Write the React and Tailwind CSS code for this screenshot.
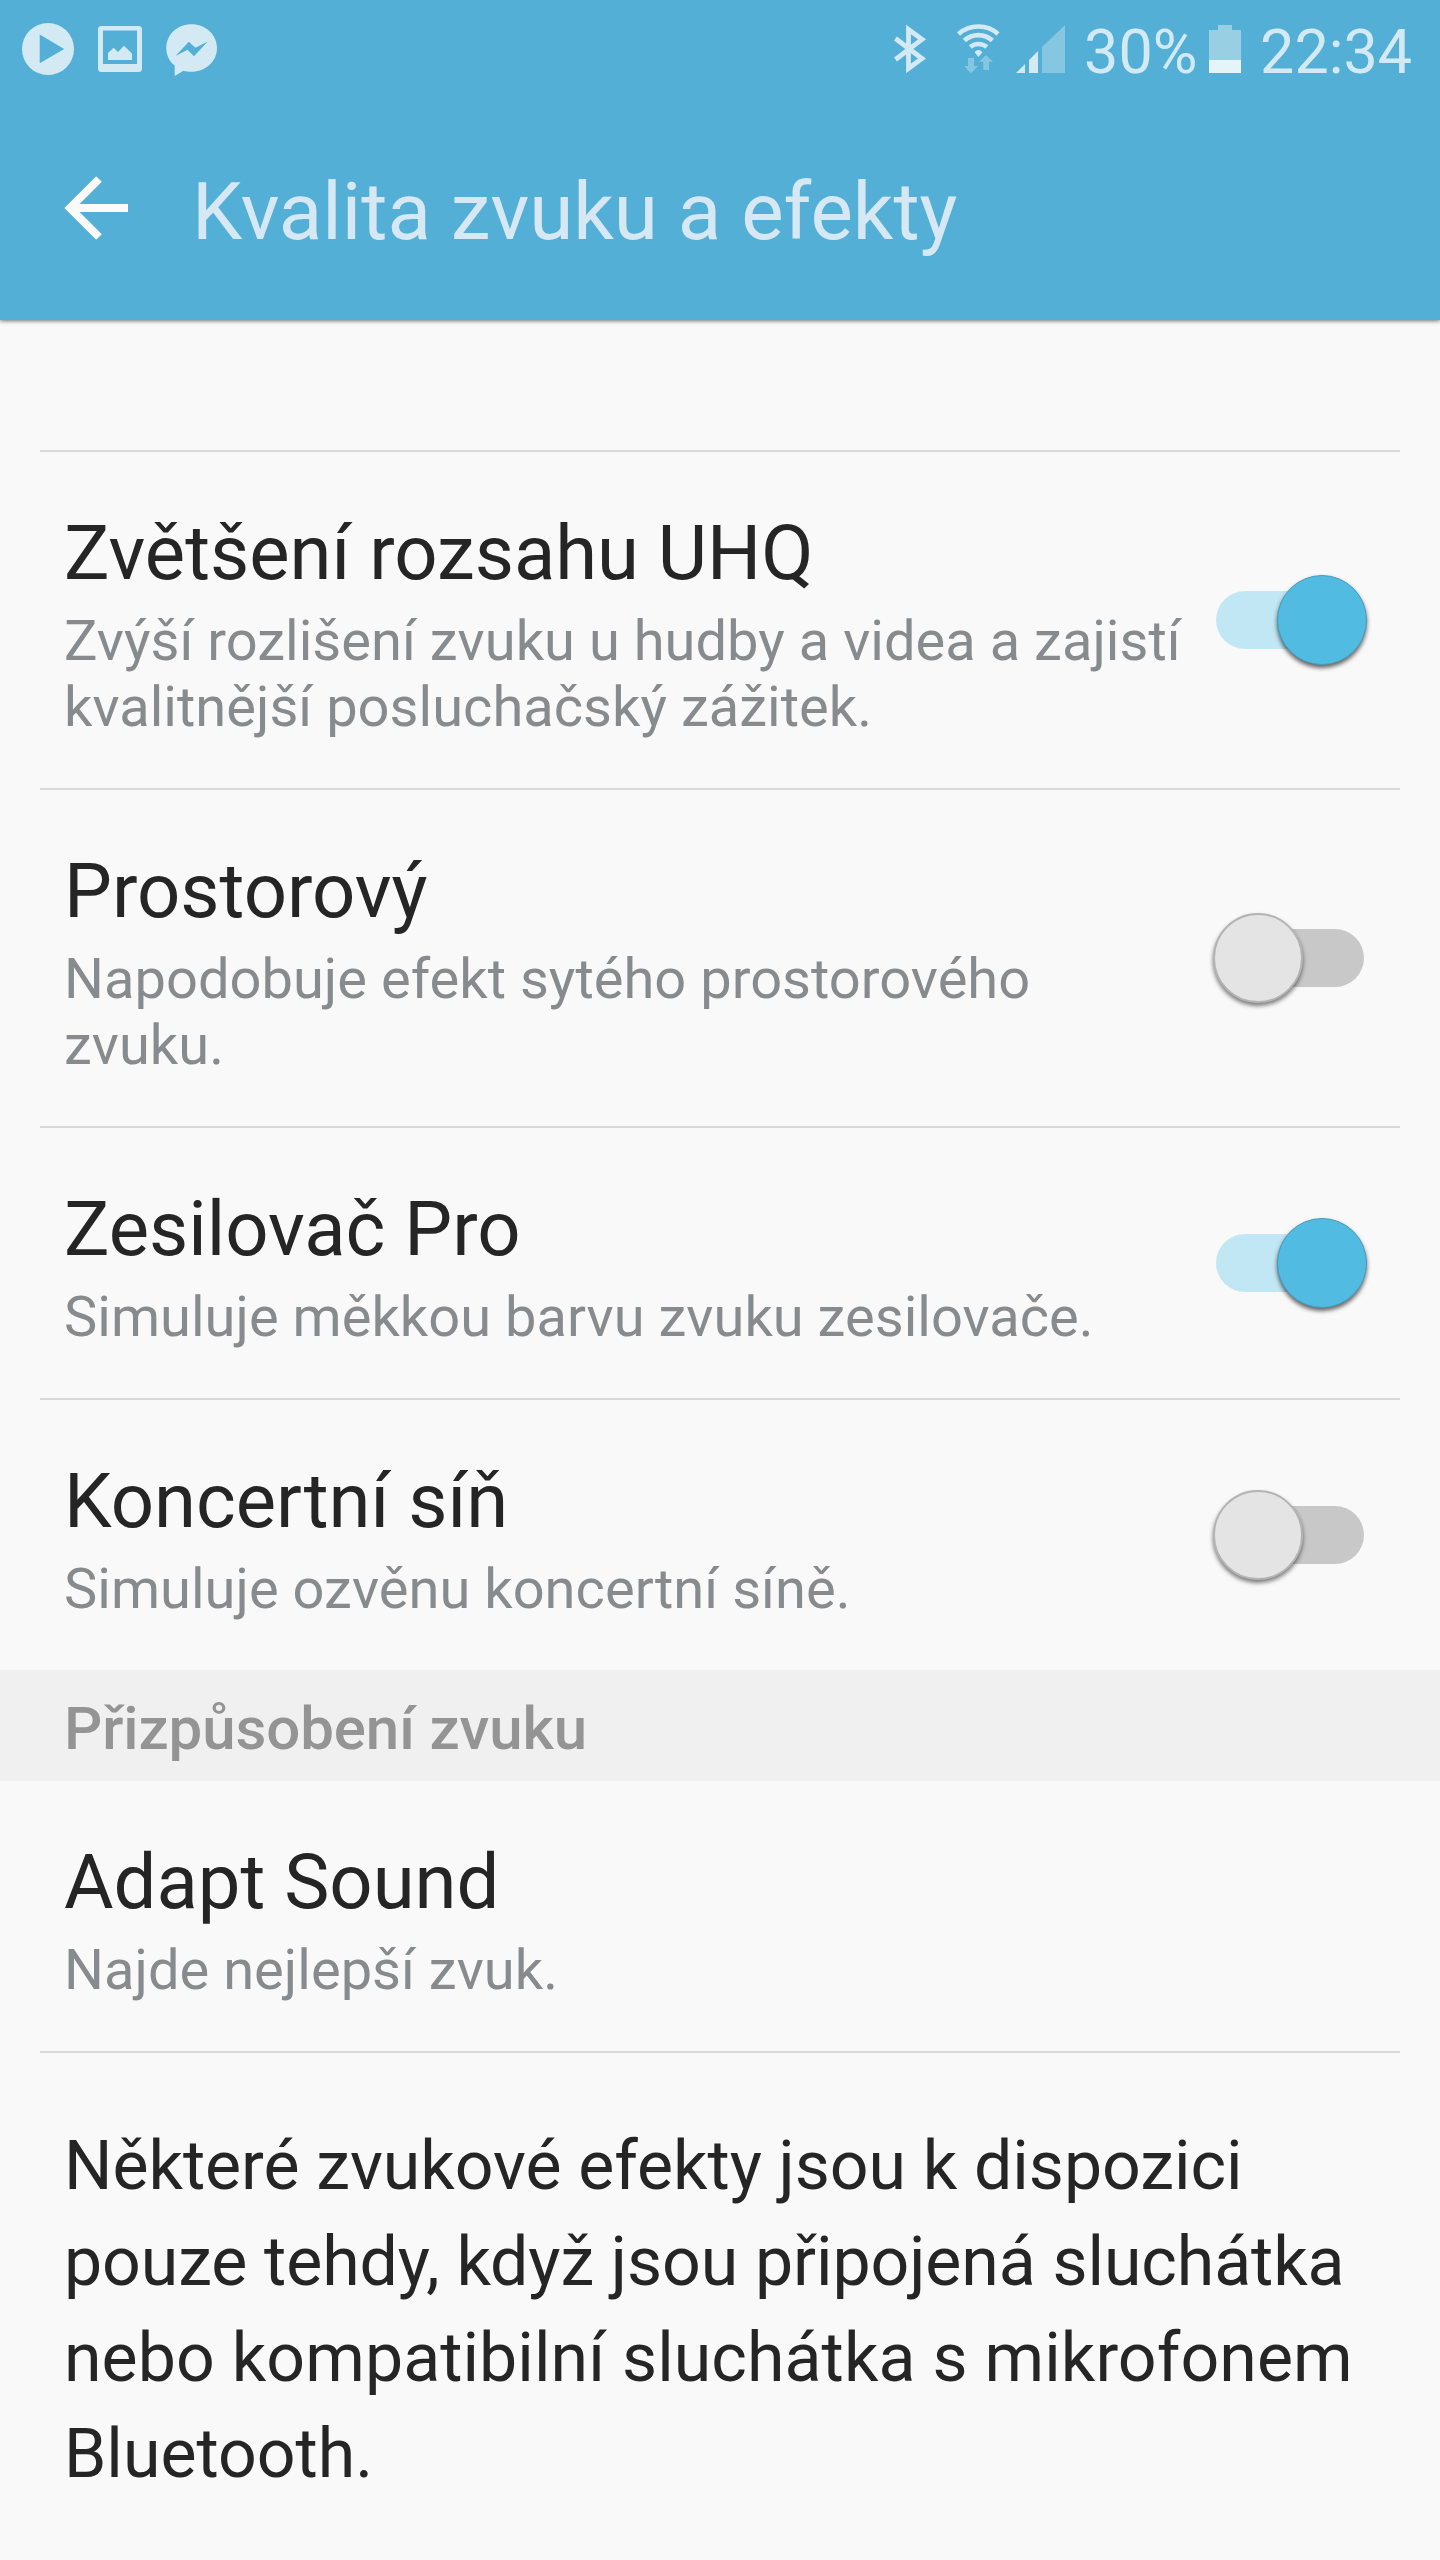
import React from "react";

function StatusBar() {
  return (
    <div className="flex h-[100px] items-center justify-between pl-[22px] pr-[28px]">
      <svg width="200" height="100" viewBox="22 0 200 100" fill="#d3eaf4">
        <path fillRule="evenodd" d="M48 23a26 26 0 1 0 0 52a26 26 0 1 0 0-52zM39.700 34.500L64.200 49L39.700 63.300z" />
        <path fillRule="evenodd" d="M101.500 26H138.500Q142 26 142 29.500V68.500Q142 72 138.500 72H101.500Q98 72 98 68.500V29.500Q98 26 101.500 26zM103 30.500V64H137V30.500z" />
        <path d="M108 60V53L113.700 47.700L118 52L124 45.700L132 53.500V60z" />
        <path fillRule="evenodd" d="M191.500 24.200C205.500 24.200 217 34.500 217 48S205.500 71.800 191.500 71.800C188.500 71.800 186 71.500 183.500 70.700L174.700 76V65.500C169.500 61.500 166.300 55.500 166.300 48C166.300 34.500 177.500 24.200 191.500 24.200zM188.800 41.700L175.500 56L187.500 49.700L194 56.300L207.700 41.500L195.400 47.800z" />
      </svg>
      <div className="flex items-center">
        <svg width="180" height="100" viewBox="890 0 180 100" fill="#d3eaf4">
          <path d="M895.500 38.500L922 58.500L908.500 68.500V29.500L922 39.300L895.500 59.500" fill="none" stroke="#d3eaf4" strokeWidth="4.800" strokeMiterlimit="10" />
          <g fill="none" stroke="#d3eaf4" strokeWidth="4.700">
            <path d="M958.500 34C969.500 24 987.500 24 998 34" />
            <path d="M964.300 40.500C972.200 33.200 984.800 33.200 992.300 40.500" />
            <path d="M970.300 47C975 43 982 43 986.800 47" />
          </g>
          <path d="M974.500 52.200Q978.500 48 982.500 52.200L978.500 57z" />
          <path fill="#85c7e0" d="M968 58H974V66H978L971 73.300L964 66H968zM983.300 70V61.700H979L986 55L993 61.700H989V70z" />
          <path d="M1016 73L1025 64V73zM1029 73V60L1038 51V73z" />
          <path fill="#85c7e0" d="M1042 73V47L1065 25V73z" />
        </svg>
        <span className="ml-[14px] mt-[3px] w-[112px] text-[61px] leading-[72px] whitespace-nowrap">30%</span>
        <svg width="34" height="100" viewBox="1208 0 34 100" className="ml-[12px]">
          <path fill="#98cfe3" d="M1209 30H1218V25H1232V30H1241V60H1209z" />
          <path fill="#e5f4f8" d="M1209 60H1241V73H1209z" />
        </svg>
        <span className="ml-[18px] mt-[3px] text-[61px] leading-[72px]">22:34</span>
      </div>
    </div>
  );
}

function Switch({ on }) {
  return (
    <div className={on ? "relative h-[58px] w-[148px] rounded-full bg-[#c2e7f4]" : "relative h-[58px] w-[148px] rounded-full bg-[#c8c8c8]"}>
      <div
        className={
          on
            ? "absolute -top-4 left-[61px] h-[90px] w-[90px] rounded-full border border-[#469cbb] bg-[#52bbe1] shadow-[0_3px_4px_rgba(0,0,0,0.6)]"
            : "absolute -top-4 -left-[3px] h-[90px] w-[90px] rounded-full border-2 border-[#b4b4b4] bg-[#e4e4e4] shadow-[0_3px_4px_rgba(0,0,0,0.5)]"
        }
      />
    </div>
  );
}

function Row({ title, lines, on, divider = true }) {
  return (
    <div className={divider ? "mx-10 flex items-center justify-between border-t-2 border-[#d9d9d9] pl-6 pr-9" : "mx-10 flex items-center justify-between pl-6 pr-9"}>
      <div className="pt-[56px] pb-[48px]">
        <h2 className="mb-[10px] text-[76px] leading-[90px] whitespace-nowrap text-[#252525]">{title}</h2>
        {lines.map((line) => (
          <p key={line} className="text-[56px] leading-[66px] tracking-[0.03px] whitespace-nowrap text-[#888b8d]">{line}</p>
        ))}
      </div>
      {on !== undefined && <Switch on={on} />}
    </div>
  );
}

export default function App() {
  return (
    <div className="h-[2560px] w-[1440px] overflow-hidden bg-[#f9f9f9] font-['Roboto',sans-serif]">
      <header className="relative h-[320px] bg-[#53afd5] text-[#d3eaf4] shadow-[0_1px_4px_rgba(0,0,0,0.55)]">
        <StatusBar />
        <div className="flex h-[220px] items-center pl-16">
          <svg width="64" height="64" viewBox="0 0 64 64" className="-mt-[4px]">
            <path d="M64 32H6M35 3L6 32L35 61" fill="none" stroke="#fafafa" strokeWidth="8" />
          </svg>
          <h1 className="mt-1 ml-[64px] text-[80px] leading-[94px] whitespace-nowrap text-[#d6e8f3]">Kvalita zvuku a efekty</h1>
        </div>
      </header>
      <main className="pt-[130px]">
        <Row title="Zvětšení rozsahu UHQ" lines={["Zvýší rozlišení zvuku u hudby a videa a zajistí", "kvalitnější posluchačský zážitek."]} on={true} />
        <Row title="Prostorový" lines={["Napodobuje efekt sytého prostorového", "zvuku."]} on={false} />
        <Row title="Zesilovač Pro" lines={["Simuluje měkkou barvu zvuku zesilovače."]} on={true} />
        <Row title="Koncertní síň" lines={["Simuluje ozvěnu koncertní síně."]} on={false} />
        <h3 className="h-[111px] bg-[#f0f0f0] pl-16 pt-[23px] text-[60px] leading-[72px] font-medium tracking-[-0.1px] text-[#949494]">Přizpůsobení zvuku</h3>
        <Row title="Adapt Sound" lines={["Najde nejlepší zvuk."]} divider={false} />
        <div className="mx-10 border-t-2 border-[#d9d9d9] pl-6 pt-[65px] text-[68px] leading-[96px] whitespace-nowrap text-[#252525]">
          <p className="tracking-[-0.05px]">Některé zvukové efekty jsou k dispozici</p>
          <p className="tracking-[-0.09px]">pouze tehdy, když jsou připojená sluchátka</p>
          <p className="tracking-[0.07px]">nebo kompatibilní sluchátka s mikrofonem</p>
          <p>Bluetooth.</p>
        </div>
      </main>
    </div>
  );
}
